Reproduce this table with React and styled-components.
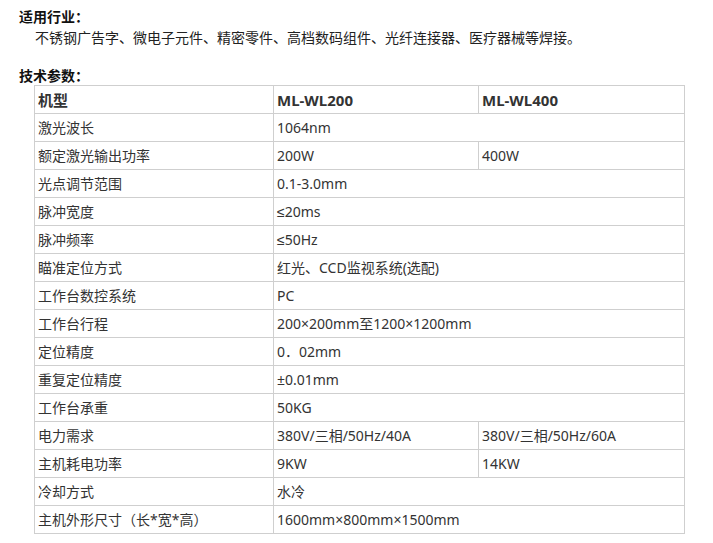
import React from 'react';
import styled, { createGlobalStyle } from 'styled-components';

const GlobalStyle = createGlobalStyle`
  body {
    margin: 0;
    background: #fff;
    font-family: 'Noto Sans', 'Liberation Sans', 'Noto Sans CJK SC', sans-serif;
    font-size: 14px;
    color: #333;
  }
`;

const rows = [
  ['激光波长', '1064nm'],
  ['额定激光输出功率', '200W', '400W'],
  ['光点调节范围', '0.1-3.0mm'],
  ['脉冲宽度', '≤20ms'],
  ['脉冲频率', '≤50Hz'],
  ['瞄准定位方式', '红光、CCD监视系统(选配)'],
  ['工作台数控系统', 'PC'],
  ['工作台行程', '200×200mm至1200×1200mm'],
  ['定位精度', '0．02mm'],
  ['重复定位精度', '±0.01mm'],
  ['工作台承重', '50KG'],
  ['电力需求', '380V/三相/50Hz/40A', '380V/三相/50Hz/60A'],
  ['主机耗电功率', '9KW', '14KW'],
  ['冷却方式', '水冷'],
  ['主机外形尺寸（长*宽*高）', '1600mm×800mm×1500mm'],
];

export default function App() {
  return (
    <Page>
      <GlobalStyle />
      <Heading>适用行业：</Heading>
      <Intro>不锈钢广告字、微电子元件、精密零件、高档数码组件、光纤连接器、医疗器械等焊接。</Intro>
      <Heading spaced>技术参数：</Heading>
      <SpecTable>
        <colgroup>
          <col style={{ width: 239 }} />
          <col style={{ width: 205 }} />
          <col />
        </colgroup>
        <tbody>
          <tr>
            <HeadCell>机型</HeadCell>
            <HeadCell>ML-WL200</HeadCell>
            <HeadCell>ML-WL400</HeadCell>
          </tr>
          {rows.map(([name, a, b]) => (
            <tr key={name}>
              <Cell>{name}</Cell>
              {b ? (
                <>
                  <Cell>{a}</Cell>
                  <Cell>{b}</Cell>
                </>
              ) : (
                <Cell colSpan={2}>{a}</Cell>
              )}
            </tr>
          ))}
        </tbody>
      </SpecTable>
    </Page>
  );
}

const Page = styled.div`
  padding: 7px 0 0 19px;
`;

const Heading = styled.div`
  font-weight: bold;
  color: #111;
  line-height: 20px;
  height: 20px;
  margin-top: ${p => (p.spaced ? '18px' : '0')};
`;

const Intro = styled.div`
  padding-left: 16px;
  line-height: 21px;
  color: #222;
`;

const SpecTable = styled.table`
  margin-left: 15px;
  margin-top: -1px;
  width: 651px;
  border-collapse: collapse;
  table-layout: fixed;
`;

const Cell = styled.td`
  height: 27px;
  padding: 0 3px;
  border: 1px solid #cfcfcf;
  line-height: 20px;
  white-space: nowrap;
  color: #333;
`;

const HeadCell = styled(Cell)`
  font-weight: bold;
  font-size: 15px;
`;
